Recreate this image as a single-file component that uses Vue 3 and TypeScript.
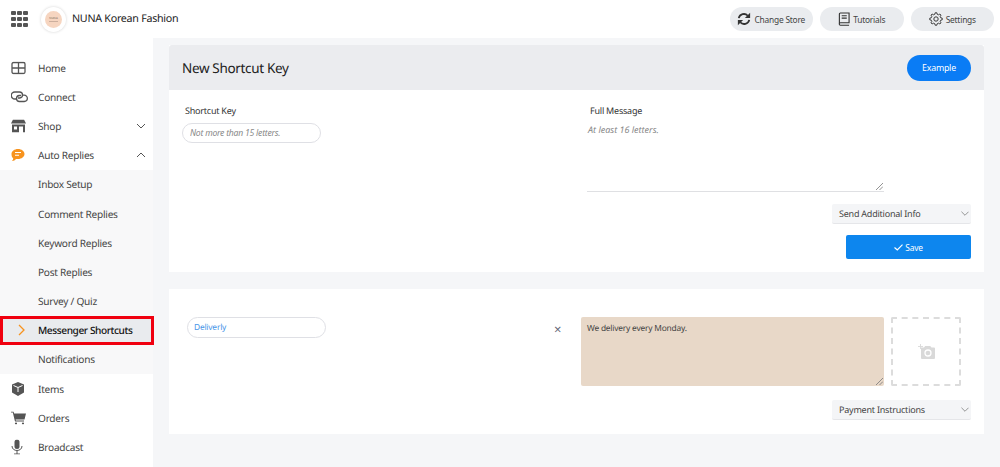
<script setup lang="ts">
const subItems: { label: string; active?: boolean }[] = [
  { label: 'Inbox Setup' },
  { label: 'Comment Replies' },
  { label: 'Keyword Replies' },
  { label: 'Post Replies' },
  { label: 'Survey / Quiz' },
  { label: 'Messenger Shortcuts', active: true },
  { label: 'Notifications' },
]
const dots = Array.from({ length: 9 }, (_, i) => i)

function gearPath(): string {
  const teeth = 8
  const out = 7.2
  const inner = 5.6
  const pts: string[] = []
  for (let i = 0; i < teeth; i++) {
    const a = (i * Math.PI * 2) / teeth
    const s = Math.PI / teeth
    const list: [number, number][] = [
      [inner, a - s * 0.62],
      [out, a - s * 0.32],
      [out, a + s * 0.32],
      [inner, a + s * 0.62],
    ]
    for (const [r, t] of list) {
      pts.push(`${(8 + r * Math.cos(t)).toFixed(2)} ${(8 + r * Math.sin(t)).toFixed(2)}`)
    }
  }
  return `M${pts.join('L')}Z`
}
const gear = gearPath()
</script>

<template>
  <div class="page">
    <header class="top">
      <div class="apps"><i v-for="d in dots" :key="d"></i></div>
      <div class="logo">
        <div class="logo-in"><span class="logo-text">NUNA</span><span class="logo-line"></span></div>
      </div>
      <div class="brand">NUNA Korean Fashion</div>
      <div class="top-actions">
        <button class="pill">
          <svg width="14" height="14" viewBox="0 0 16 16" fill="none" stroke="#333" stroke-width="2"><path d="M2 7A6 6 0 0 1 12.300 4.300"/><path d="M15 .8v6H9z" fill="#333" stroke="none"/><path d="M14 9A6 6 0 0 1 3.700 11.700"/><path d="M1 15.200v-6h6z" fill="#333" stroke="none"/></svg>
          Change Store
        </button>
        <button class="pill">
          <svg width="12" height="14" viewBox="0 0 13 15" fill="none" stroke="#333" stroke-width="1.200"><path d="M1.500 12V2a1 1 0 0 1 1-1h9.500v10.500H2.700a1.300 1.300 0 0 0 0 2.700H12"/><path d="M4 4h5.500M4 6.500h5.500"/></svg>
          Tutorials
        </button>
        <button class="pill">
          <svg width="14" height="14" viewBox="0 0 16 16" fill="none" stroke="#333" stroke-width="1.100"><circle cx="8" cy="8" r="2.500"/><path :d="gear" stroke-linejoin="round"/></svg>
          Settings
        </button>
      </div>
    </header>

    <div class="body">
      <aside class="side">
        <div class="nav">
          <svg class="ico" width="15" height="13" viewBox="0 0 15 13" fill="none" stroke="#555" stroke-width="1.300"><rect x="1" y="1" width="13" height="11" rx="1.500"/><path d="M7.500 1v11M1 6.500h13"/></svg>
          Home
        </div>
        <div class="nav">
          <svg class="ico" width="17" height="13" viewBox="0 0 17 13" fill="none" stroke="#555" stroke-width="1.300"><path d="M6 8.500H3.800A2.900 2.900 0 0 1 3.800 1.500H8.500A3 3 0 0 1 11.500 4.500a3 3 0 0 1-2.800 3H7"/><path d="M11 4.700h2.200a2.900 2.900 0 0 1 0 6.300H8.500A3 3 0 0 1 5.500 8a3 3 0 0 1 2.800-3H10"/></svg>
          Connect
        </div>
        <div class="nav">
          <svg class="ico" width="15" height="13" viewBox="0 0 15 13" fill="#555"><path d="M2 0h11l2 4H0z"/><path d="M1 5h13v8h-2V7H8v6H1zM3 7h3v3H3z" fill-rule="evenodd"/></svg>
          Shop
          <svg class="chev" width="10" height="6" viewBox="0 0 10 6" fill="none" stroke="#555" stroke-width="1"><path d="M1 1l4 4 4-4"/></svg>
        </div>
        <div class="nav">
          <svg class="ico" width="14" height="13" viewBox="0 0 14 13"><path d="M7 .5c3.600 0 6.500 2.200 6.500 5s-2.900 5-6.500 5H5c-.8 1-2.200 2-4 2 .8-.8 1.200-1.500 1.200-2.700C.9 8.900.5 7.400.5 5.500.5 2.700 3.400.5 7 .5z" fill="#f7931e"/><path d="M4 4h6M4 6.700h4" stroke="#fff" stroke-width="1.100"/></svg>
          Auto Replies
          <svg class="chev" width="10" height="6" viewBox="0 0 10 6" fill="none" stroke="#555" stroke-width="1"><path d="M1 5l4-4 4 4"/></svg>
        </div>
        <div class="subs">
          <div v-for="s in subItems" :key="s.label" class="sub" :class="{ active: s.active }">
            <svg v-if="s.active" class="sub-arrow" width="7" height="12" viewBox="0 0 7 12" fill="none" stroke="#f7931e" stroke-width="1.300"><path d="M1 1l5 5-5 5"/></svg>
            {{ s.label }}
          </div>
        </div>
        <div class="nav">
          <svg class="ico" width="14" height="14" viewBox="0 0 14 14"><path d="M7 0l6 2.500v8L7 14l-6-3.500v-8z" fill="#555"/><path d="M2.500 3.500L7 5.500l4.500-2M7 5.500V10" stroke="#fff" stroke-width="1" fill="none"/></svg>
          Items
        </div>
        <div class="nav">
          <svg class="ico" width="15" height="13" viewBox="0 0 15 13" fill="#555"><path d="M0 0h2.500l.6 2H15l-1.500 6H4.600l.3 1H13v1H4L1.800 1H0z"/><circle cx="5" cy="12" r="1.100"/><circle cx="12" cy="12" r="1.100"/></svg>
          Orders
        </div>
        <div class="nav">
          <svg class="ico" width="12" height="15" viewBox="0 0 12 15"><rect x="3.500" y="0" width="5" height="9.500" rx="2.500" fill="#555"/><path d="M1 6.500c0 6 10 6 10 0M6 11.500V14.500M3 14.500h6" stroke="#555" stroke-width="1" fill="none"/></svg>
          Broadcast
        </div>
      </aside>

      <main class="main">
        <section class="card first">
          <div class="card-head">
            <h1>New Shortcut Key</h1>
            <button class="example">Example</button>
          </div>
          <div class="form">
            <div class="left">
              <label>Shortcut Key</label>
              <input class="key" placeholder="Not more than 15 letters." />
            </div>
            <div class="right">
              <label>Full Message</label>
              <div class="msg-box">
                <span class="ph">At least 16 letters.</span>
                <svg class="grip" width="7" height="7" viewBox="0 0 7 7" stroke="#777" stroke-width=".8"><path d="M0 7l7-7M3.500 7L7 3.500"/></svg>
              </div>
              <div class="controls">
                <div class="sel">Send Additional Info<svg width="8" height="5" viewBox="0 0 9 5" fill="none" stroke="#888"><path d="M.5.5l4 4 4-4"/></svg></div>
                <button class="save">
                  <svg width="9" height="7" viewBox="0 0 9 7" fill="none" stroke="#fff" stroke-width="1.200"><path d="M.5 3.500L3.300 6 8.500.7"/></svg>
                  Save
                </button>
              </div>
            </div>
          </div>
        </section>

        <section class="card second">
          <div class="row">
            <div class="entry-left">
              <div class="key-val">Deliverly</div>
              <span class="x">×</span>
            </div>
            <div class="entry-right">
              <div class="media">
                <div class="filled">
                  We delivery every Monday.
                  <svg class="grip" width="7" height="7" viewBox="0 0 7 7" stroke="#777" stroke-width=".8"><path d="M0 7l7-7M3.500 7L7 3.500"/></svg>
                </div>
                <div class="upload">
                  <svg width="17" height="15" viewBox="0 0 17 15"><path d="M3 3.500h3L7.200 2h5L13.500 3.500H16a1 1 0 0 1 1 1V14a1 1 0 0 1-1 1H4a1 1 0 0 1-1-1z" fill="#d9d9d9"/><circle cx="10" cy="9" r="3" fill="#d9d9d9" stroke="#fff" stroke-width="1.300"/><path d="M2.500 0v5M0 2.500h5" stroke="#d9d9d9" stroke-width=".9"/></svg>
                </div>
              </div>
              <div class="sel bottom">Payment Instructions<svg width="8" height="5" viewBox="0 0 9 5" fill="none" stroke="#888"><path d="M.5.5l4 4 4-4"/></svg></div>
            </div>
          </div>
        </section>
      </main>
    </div>
  </div>
</template>

<style>
html, body { margin: 0; background: #fff; }
</style>

<style scoped>
* { box-sizing: border-box; letter-spacing: -.025em; }
.page { width: 1000px; height: 467px; overflow: hidden; font-family: "Noto Sans", "Open Sans", sans-serif; color: #333; font-size: 10px; text-rendering: geometricPrecision; }
.top { height: 38px; display: flex; align-items: center; background: #fff; padding-left: 11px; }
.apps { display: grid; grid-template-columns: repeat(3, 4.500px); gap: 1.500px; width: 18px; }
.apps i { display: block; height: 4.500px; border-radius: 1px; background: #555; }
.logo { width: 25px; height: 25px; margin-left: 12px; border-radius: 50%; background: #fff; box-shadow: 0 0 3px rgba(0,0,0,.18); display: flex; align-items: center; justify-content: center; }
.logo-in { width: 17px; height: 17px; border-radius: 50%; background: #f6d5c0; display: flex; flex-direction: column; align-items: center; justify-content: center; gap: 1px; }
.logo-text { font-size: 2.800px; line-height: 3px; color: #6b5a50; letter-spacing: .05em; }
.logo-line { width: 9px; height: 1px; background: #6b5a50; opacity: .3; }
.brand { margin-left: 6px; font-size: 10.700px; color: #222; }
.top-actions { margin-left: auto; display: flex; gap: 7px; padding-right: 6px; }
.pill { width: 83.500px; height: 24px; border: 0; border-radius: 12px; background: #eaecef; color: #444; font: inherit; font-size: 8.400px; display: flex; align-items: center; justify-content: center; gap: 3px; padding: 0; }
.body { display: flex; height: 429px; }
.side { width: 153px; flex: none; background: #fff; padding-top: 15px; }
.nav { height: 29.200px; position: relative; display: flex; align-items: center; padding-left: 38px; font-size: 10.100px; color: #444; }
.ico { position: absolute; left: 11px; top: 50%; transform: translateY(-50%); }
.chev { position: absolute; right: 7px; top: 50%; margin-top: -3px; }
.subs { background: #f8f8f9; }
.sub { height: 29.200px; display: flex; align-items: center; padding-left: 38px; font-size: 10.100px; color: #444; position: relative; }
.sub.active { background: #e9ebee; color: #111; font-weight: 500; letter-spacing: -.04em; outline: 3px solid #f0000f; outline-offset: -3px; width: 154px; }
.sub-arrow { position: absolute; left: 17.500px; top: 50%; margin-top: -6px; }
.main { flex: 1; background: #f5f6f8; padding: 7px 16px 0; }
.card { background: #fff; }
.first { height: 227px; }
.card-head { height: 45px; background: #ebecef; display: flex; align-items: center; justify-content: space-between; padding: 0 13px; border-radius: 3px 3px 0 0; }
.card-head h1 { margin: 0; font-size: 13.500px; font-weight: 400; color: #222; }
.example { width: 64px; height: 26px; border: 0; border-radius: 13px; background: #0a7cf5; color: #fff; font: inherit; font-size: 8.800px; padding: 0; }
.form { display: flex; padding-top: 14px; }
.left { width: 400px; padding-left: 13px; }
.left label { display: block; margin-left: 3px; }
label { font-size: 9px; color: #333; line-height: 14px; }
.key { display: block; margin-top: 5px; width: 139px; height: 20px; border: 1.500px solid #dfe0e5; border-radius: 10px; background: #fff; padding: 0 7px; font: inherit; font-size: 8.600px; font-style: italic; outline: none; }
.key::placeholder { color: #888; }
.right { width: 402px; padding-left: 13px; position: relative; }
.right label { display: block; margin-left: 8px; }
.msg-box { margin-left: 5px; margin-top: 1px; height: 73px; width: 297px; border-bottom: 1px solid #dfe0e3; position: relative; font-size: 9px; font-style: italic; color: #888; padding: 6px 1px; }
.ph { display: block; margin-top: -2px; letter-spacing: 0; }
.grip { position: absolute; right: 1px; bottom: 1px; }
.controls { display: flex; flex-direction: column; align-items: flex-end; margin-top: 12px; }
.sel { width: 139px; height: 20px; background: #f4f5f7; border-radius: 2px; border-bottom: 1px solid #e5e6e9; display: flex; align-items: center; justify-content: space-between; padding: 0 2px 0 7px; font-size: 9px; color: #444; }
.save { width: 125px; height: 24px; margin-top: 11px; border: 0; border-radius: 2px; background: #0d86ee; color: #fff; font: inherit; font-size: 8.400px; display: flex; align-items: center; justify-content: center; gap: 2px; padding: 0; }
.second { height: 145px; margin-top: 17px; }
.row { display: flex; padding-top: 28px; }
.entry-left { width: 412px; padding-left: 18px; display: flex; align-items: flex-start; position: relative; }
.key-val { width: 139px; height: 21px; border: 1.500px solid #dfe0e5; border-radius: 11px; padding: 0 6px; font-size: 8.400px; color: #4a96e8; display: flex; align-items: center; }
.x { position: absolute; left: 385px; top: 3px; font-size: 13px; color: #667; line-height: 18px; }
.entry-right { width: 390px; display: flex; flex-direction: column; align-items: flex-end; }
.media { display: flex; gap: 7px; width: 100%; padding-right: 10px; }
.filled { flex: 1; height: 69px; background: #e8d8c8; border-radius: 2px; padding: 6px; font-size: 8.400px; color: #444; position: relative; line-height: 11px; }
.upload { width: 70px; height: 69px; border: 2px dashed #dcdcdc; border-radius: 2px; display: flex; align-items: center; justify-content: center; }
.bottom { margin-top: 14px; }
</style>
